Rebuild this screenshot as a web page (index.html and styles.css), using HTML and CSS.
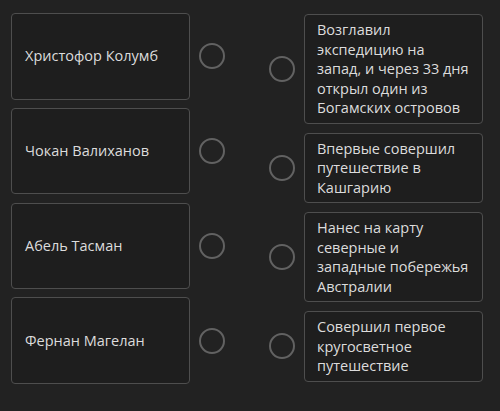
FILE: index.html
```html
<!DOCTYPE html>
<html lang="ru">
<head>
<meta charset="utf-8">
<link rel="stylesheet" href="styles.css">
</head>
<body>
<div class="board">
  <div class="col col-left">
    <div class="row"><div class="card card-left">Христофор Колумб</div><span class="dot"></span></div>
    <div class="row"><div class="card card-left">Чокан Валиханов</div><span class="dot"></span></div>
    <div class="row"><div class="card card-left">Абель Тасман</div><span class="dot"></span></div>
    <div class="row"><div class="card card-left">Фернан Магелан</div><span class="dot"></span></div>
  </div>
  <div class="col col-right">
    <div class="row"><span class="dot"></span><div class="card card-right">Возглавил экспедицию на запад, и через 33 дня открыл один из Богамских островов</div></div>
    <div class="row"><span class="dot"></span><div class="card card-right">Впервые совершил путешествие в Кашгарию</div></div>
    <div class="row"><span class="dot"></span><div class="card card-right">Нанес на карту северные и западные побережья Австралии</div></div>
    <div class="row"><span class="dot"></span><div class="card card-right">Совершил первое кругосветное путешествие</div></div>
  </div>
</div>
</body>
</html>
```

FILE: styles.css
```css
html, body {
  margin: 0;
  padding: 0;
  background: #222222;
}
body {
  width: 500px;
  height: 411px;
  overflow: hidden;
  font-family: "Open Sans", "Noto Sans", sans-serif;
  font-size: 14.5px;
  color: #dcdcdc;
}
.board {
  display: flex;
  padding: 13px 0 0 11px;
  gap: 0;
}
.col {
  display: flex;
  flex-direction: column;
  gap: 8.3px;
}
.col-left {
  width: 258px;
}
.col-right {
  padding-top: 1px;
  gap: 8.6px;
}
.row {
  display: flex;
  align-items: center;
}
.card {
  box-sizing: border-box;
  width: 179px;
  background: #1e1e1e;
  border: 1.5px solid #4e4e4e;
  border-radius: 4px;
  line-height: 19.6px;
}
.card-left {
  height: 86.5px;
  display: flex;
  align-items: center;
  padding: 0 12px 0 13px;
}
.card-right {
  padding: 5px 12px 5px 12px;
}
.dot {
  box-sizing: border-box;
  flex: none;
  width: 26px;
  height: 26px;
  border: 2.5px solid #626262;
  border-radius: 50%;
}
.col-left .dot {
  margin-left: 9px;
}
.col-right .dot {
  margin-right: 9px;
}
```
